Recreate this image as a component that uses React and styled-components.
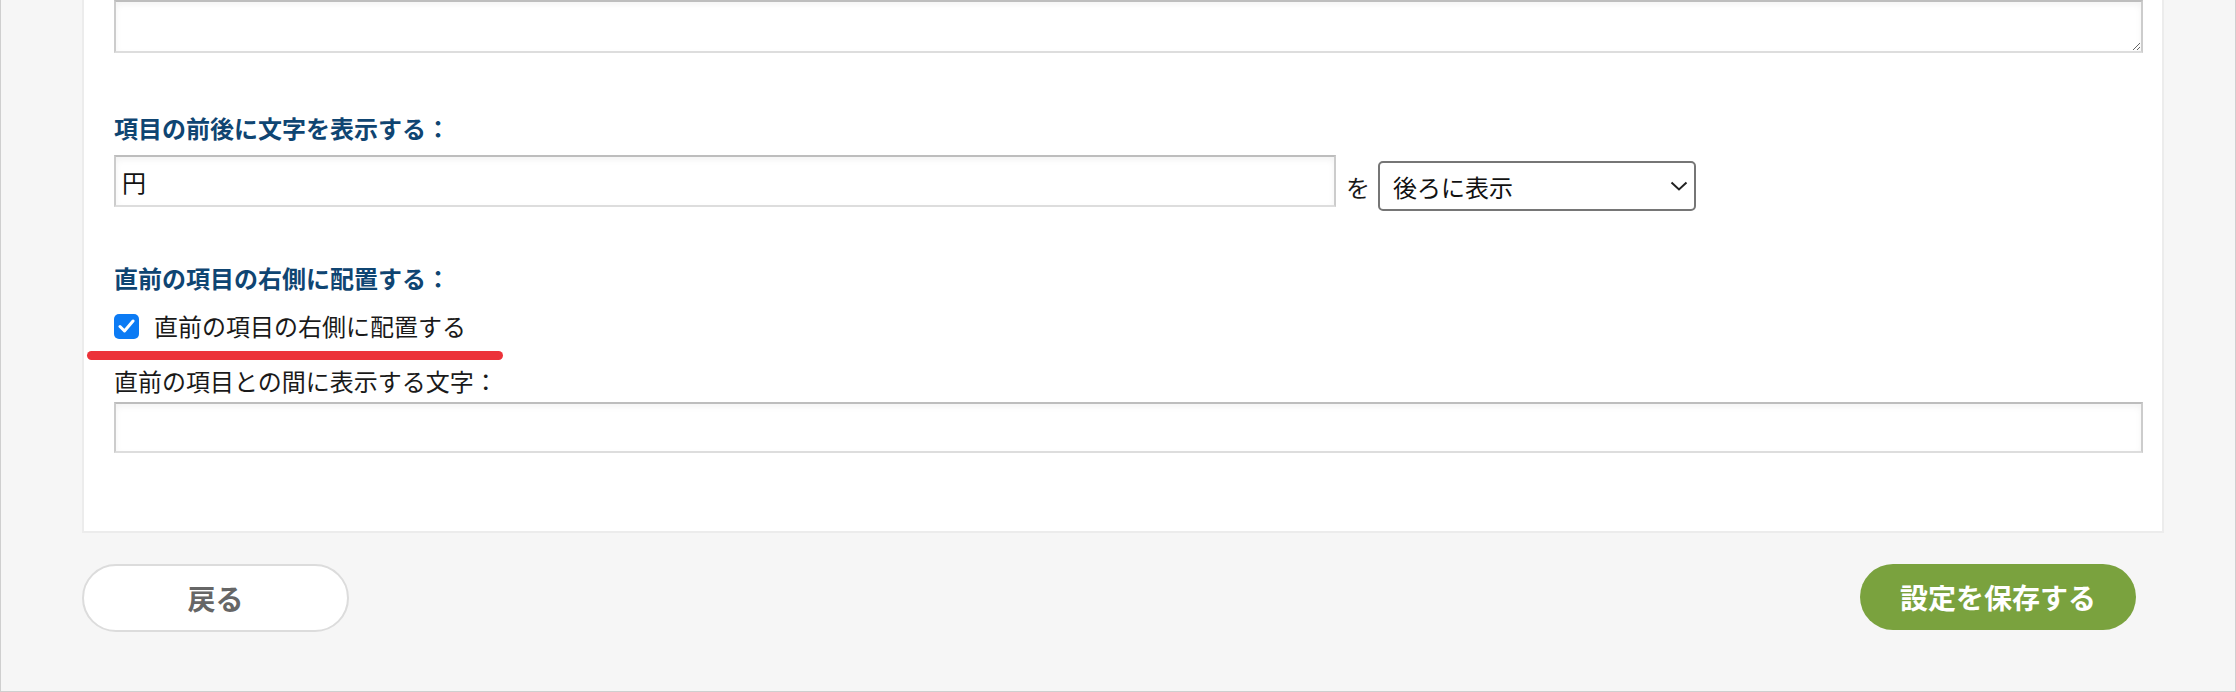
import React from 'react';
import styled, { createGlobalStyle } from 'styled-components';

const GlobalStyle = createGlobalStyle`
  html, body {
    margin: 0;
    padding: 0;
    background: #f6f6f6;
  }
  * {
    box-sizing: border-box;
  }
`;

const Frame = styled.div`
  width: 2236px;
  height: 692px;
  overflow: hidden;
  background: #f6f6f6;
  border: 1px solid #cfcfcf;
  border-top: none;
  padding: 0 71px 0 81px;
  font-family: 'Noto Sans CJK JP', 'Noto Sans', sans-serif;
  color: #1a1a1a;
`;

const Panel = styled.div`
  background: #fff;
  border: 2px solid #ececec;
  border-top: none;
  padding: 0 19px 78px 30px;
`;

const fieldBorder = `
  border: 2px solid;
  border-color: #bdbdbd #cccccc #dddddd #cccccc;
  box-shadow: inset 0 3px 6px rgba(0, 0, 0, 0.05);
  background: #fff;
  outline: none;
`;

const TextArea = styled.textarea`
  display: block;
  width: 100%;
  height: 53px;
  ${fieldBorder}
  font: inherit;
`;

const Label = styled.div`
  font-size: 24px;
  line-height: 36px;
  font-weight: 700;
  color: #0f4572;
  margin-top: ${(p) => p.$top || 0}px;
`;

const Row = styled.div`
  display: flex;
  align-items: flex-start;
  margin-top: ${(p) => (p.$top !== undefined ? p.$top : 9)}px;
`;

const TextInput = styled.input`
  display: block;
  width: ${(p) => p.$width || '100%'};
  height: ${(p) => p.$height || 52}px;
  ${fieldBorder}
  padding: 0 6px;
  font-family: inherit;
  font-size: 24px;
  color: #111;
`;

const Suffix = styled.div`
  display: flex;
  align-items: center;
  margin-top: 6px;
  margin-left: 10px;
  font-size: 24px;
  gap: 8px;
`;

const SelectWrap = styled.div`
  position: relative;
  width: 318px;
  height: 50px;
`;

const Select = styled.select`
  appearance: none;
  width: 100%;
  height: 100%;
  border: 2px solid #767676;
  border-radius: 5px;
  background: #fff;
  padding: 0 40px 0 13px;
  font-family: inherit;
  font-size: 24px;
  color: #111;
  outline: none;
`;

const Chevron = styled.svg`
  position: absolute;
  right: 8px;
  top: 20px;
  pointer-events: none;
`;

const CheckRow = styled.label`
  position: relative;
  display: flex;
  align-items: center;
  gap: 15px;
  margin-top: 12px;
  font-size: 24px;
  line-height: 36px;
`;

const Box = styled.span`
  display: flex;
  align-items: center;
  justify-content: center;
  width: 25px;
  height: 25px;
  border-radius: 5px;
  background: #0c7bf4;
`;

const Marker = styled.span`
  position: absolute;
  left: -27px;
  top: 43px;
  width: 416px;
  height: 9px;
  border-radius: 5px;
  background: #ec3239;
`;

const Caption = styled.div`
  font-size: 24px;
  line-height: 36px;
  margin-top: 19px;
`;

const Footer = styled.div`
  display: flex;
  justify-content: space-between;
  align-items: flex-start;
  margin-top: 31px;
  padding-right: 28px;
`;

const PillButton = styled.button`
  width: ${(p) => (p.$primary ? 276 : 267)}px;
  height: ${(p) => (p.$primary ? 66 : 68)}px;
  border-radius: 40px;
  border: ${(p) => (p.$primary ? 'none' : '2px solid #dcdcdc')};
  background: ${(p) => (p.$primary ? '#7aa23e' : '#fff')};
  color: ${(p) => (p.$primary ? '#fff' : '#666')};
  font-family: inherit;
  font-size: 28px;
  font-weight: 700;
  cursor: pointer;
`;

export default function App() {
  return (
    <>
      <GlobalStyle />
      <Frame>
        <Panel>
          <TextArea defaultValue="" />

          <Label $top={57}>項目の前後に文字を表示する：</Label>
          <Row>
            <TextInput $width="1222px" defaultValue="円" />
            <Suffix>
              <span>を</span>
              <SelectWrap>
                <Select defaultValue="after">
                  <option value="before">前に表示</option>
                  <option value="after">後ろに表示</option>
                </Select>
                <Chevron width="18" height="10" viewBox="0 0 18 10">
                  <path d="M1.5 1.5 L9 8.5 L16.5 1.5" fill="none" stroke="#222" strokeWidth="2" />
                </Chevron>
              </SelectWrap>
            </Suffix>
          </Row>

          <Label $top={49}>直前の項目の右側に配置する：</Label>
          <CheckRow>
            <Box>
              <svg width="17" height="14" viewBox="0 0 17 14">
                <path d="M2 7.5 L6.5 12 L15 2" fill="none" stroke="#fff" strokeWidth="3" strokeLinecap="round" strokeLinejoin="round" />
              </svg>
            </Box>
            <span>直前の項目の右側に配置する</span>
            <Marker />
          </CheckRow>
          <Caption>直前の項目との間に表示する文字：</Caption>
          <Row $top={3}>
            <TextInput $height={51} defaultValue="" />
          </Row>
        </Panel>
        <Footer>
          <PillButton>戻る</PillButton>
          <PillButton $primary>設定を保存する</PillButton>
        </Footer>
      </Frame>
    </>
  );
}
